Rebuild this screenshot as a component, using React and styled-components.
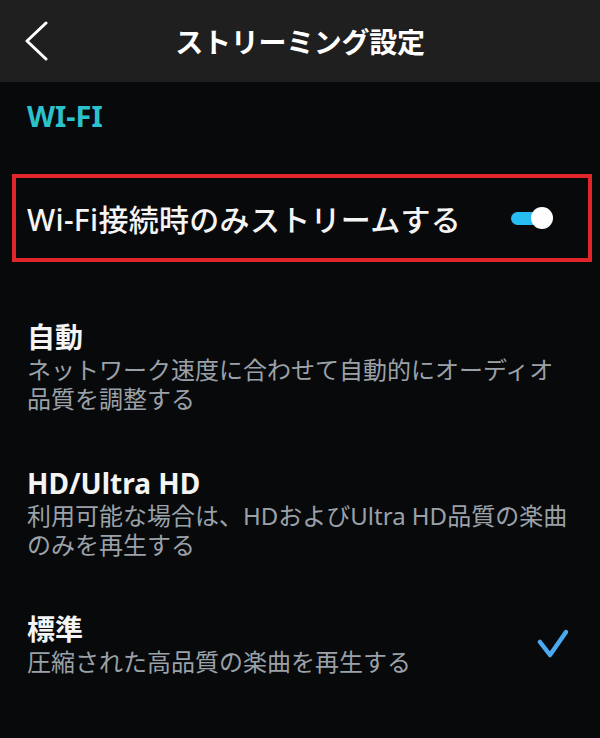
import React, { useState } from 'react';
import styled, { createGlobalStyle } from 'styled-components';

const GlobalStyle = createGlobalStyle`
  html, body {
    margin: 0;
    padding: 0;
    background: #08090b;
  }
  body {
    font-family: "Noto Sans", "Noto Sans CJK JP", sans-serif;
    color: #f2f2f2;
  }
`;

const Page = styled.div`
  width: 600px;
  min-height: 738px;
  background: #08090b;
  overflow: hidden;
`;

// top bar with back arrow and centered title
const Header = styled.header`
  height: 82px;
  background: #1f1f1f;
  display: grid;
  grid-template-columns: 70px 1fr 70px;
  align-items: center;
`;

const BackButton = styled.button`
  background: none;
  border: none;
  padding: 0 0 0 24px;
  height: 82px;
  display: flex;
  align-items: center;
  cursor: pointer;
`;

const Title = styled.h1`
  margin: 0;
  text-align: center;
  font-size: 28px;
  font-weight: 700;
  color: #ffffff;
  letter-spacing: -0.3px;
`;

const SectionLabel = styled.div`
  margin: 16px 0 0 27px;
  height: 36px;
  line-height: 36px;
  font-size: 29px;
  font-weight: 700;
  color: #2cc1cd;
`;

const ToggleRow = styled.div`
  margin: 40px 8px 0 12px;
  height: 80px;
  border: 4px solid #e1252b;
  display: flex;
  align-items: center;
  justify-content: space-between;
  padding: 0 35px 0 11px;
`;

const ToggleText = styled.span`
  font-size: 30px;
  font-weight: 500;
  color: #f4f4f4;
  letter-spacing: 0.3px;
`;

const Switch = styled.div`
  position: relative;
  width: 42px;
  height: 22px;
  cursor: pointer;
`;

const Track = styled.div`
  position: absolute;
  left: 0;
  top: 5px;
  width: 38px;
  height: 13px;
  border-radius: 7px;
  background: ${({ on }) => (on ? '#27bdf0' : '#555')};
`;

const Thumb = styled.div`
  position: absolute;
  top: 0;
  left: ${({ on }) => (on ? '20px' : '0')};
  width: 22px;
  height: 22px;
  border-radius: 50%;
  background: #ffffff;
`;

const OptionList = styled.div`
  padding-top: 31px;
`;

const Option = styled.div`
  display: flex;
  align-items: center;
  justify-content: space-between;
  padding: 26px 28px 26px 27px;
  cursor: pointer;
`;

const OptionText = styled.div`
  display: flex;
  flex-direction: column;
`;

const OptionTitle = styled.div`
  font-size: 28px;
  font-weight: 700;
  line-height: 36px;
  color: #f4f4f4;
`;

const OptionDesc = styled.div`
  font-size: 24px;
  line-height: 29px;
  color: #9ba1a8;
  max-width: 545px;
`;

const CheckMark = styled.svg`
  flex-shrink: 0;
  margin-right: 4px;
`;

const Check = () => (
  <CheckMark width="32" height="30" viewBox="0 0 32 30" fill="none">
    <polyline
      points="4,13 14,26 30,3"
      stroke="#4aa9ef"
      strokeWidth="4.5"
      strokeLinecap="round"
      strokeLinejoin="round"
    />
  </CheckMark>
);

const options = [
  {
    id: 'auto',
    title: '自動',
    desc: 'ネットワーク速度に合わせて自動的にオーディオ品質を調整する',
  },
  {
    id: 'hd',
    title: 'HD/Ultra HD',
    desc: '利用可能な場合は、HDおよびUltra HD品質の楽曲のみを再生する',
  },
  {
    id: 'standard',
    title: '標準',
    desc: '圧縮された高品質の楽曲を再生する',
  },
];

const App = () => {
  const [wifiOnly, setWifiOnly] = useState(true);
  const [quality, setQuality] = useState('standard');

  return (
    <>
      <GlobalStyle />
      <Page>
        <Header>
          <BackButton aria-label="戻る">
            <svg width="24" height="42" viewBox="0 0 24 42" fill="none">
              <polyline
                points="22,3 3,21 22,39"
                stroke="#ffffff"
                strokeWidth="3"
                strokeLinecap="round"
                strokeLinejoin="round"
              />
            </svg>
          </BackButton>
          <Title>ストリーミング設定</Title>
          <span />
        </Header>

        <SectionLabel>WI-FI</SectionLabel>

        <ToggleRow>
          <ToggleText>Wi-Fi接続時のみストリームする</ToggleText>
          <Switch onClick={() => setWifiOnly(!wifiOnly)}>
            <Track on={wifiOnly} />
            <Thumb on={wifiOnly} />
          </Switch>
        </ToggleRow>

        <OptionList>
          {options.map((o) => (
            <Option key={o.id} onClick={() => setQuality(o.id)}>
              <OptionText>
                <OptionTitle>{o.title}</OptionTitle>
                <OptionDesc>{o.desc}</OptionDesc>
              </OptionText>
              {quality === o.id && <Check />}
            </Option>
          ))}
        </OptionList>
      </Page>
    </>
  );
};

export default App;
